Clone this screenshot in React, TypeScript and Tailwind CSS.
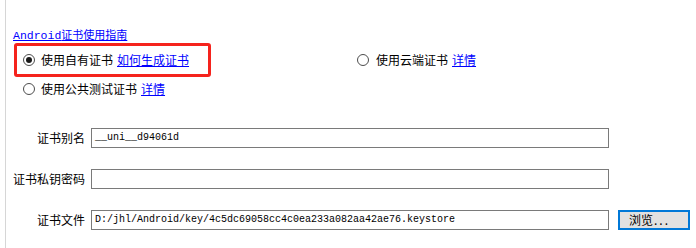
import React from 'react'

const cjk = "font-['Noto_Sans_CJK_SC','Noto_Sans',sans-serif]"
const mono = "font-['Liberation_Mono','Noto_Sans_CJK_SC',monospace]"

function Radio({ checked }: { checked?: boolean }) {
  return (
    <span className="w-[12px] h-[12px] rounded-full border border-[#4d4d4d] bg-white flex items-center justify-center shrink-0">
      {checked && <span className="w-[6px] h-[6px] rounded-full bg-[#1a1a1a]" />}
    </span>
  )
}

function Field({ label, value, top }: { label: string; value?: string; top: string }) {
  return (
    <div className={`flex items-center ${top}`}>
      <div className="w-[79px] text-right text-[12px] leading-[20px] text-black">{label}</div>
      <div className={`ml-[6px] w-[518px] h-[20px] border border-[#7a7a7a] bg-white px-[3px] text-[10px] leading-[18px] text-black ${mono} whitespace-nowrap overflow-hidden`}>
        {value}
      </div>
    </div>
  )
}

export default function App() {
  return (
    <div className={`w-[696px] h-[248px] bg-white flex overflow-hidden ${cjk}`}>
      <div className="ml-[5px] border-l border-[#d6d6d6] flex-1 h-full">
        <div className="pt-[20px] pl-[7px] h-[36px]">
          <a href="#" className="text-[11px] leading-[16px] text-[#0000ff] underline">
            <span className={`${mono} text-[11.5px]`}>Android</span>证书使用指南
          </a>
        </div>

        <div className="mt-[7px] flex items-start">
          <div className="ml-[8px] w-[197px] h-[34px] border-[3px] border-[#f5231d] rounded-[3px] flex items-center pl-[6px] gap-[6px]">
            <Radio checked />
            <span className="text-[12px] leading-[16px] text-black">使用自有证书</span>
            <a href="#" className="-ml-[2px] text-[12px] leading-[16px] text-[#0000ff] underline">如何生成证书</a>
          </div>
          <div className="ml-[146px] h-[34px] flex items-center gap-[7px]">
            <Radio />
            <span className="text-[12px] leading-[16px] text-black">使用云端证书</span>
            <a href="#" className="-ml-[3px] text-[12px] leading-[16px] text-[#0000ff] underline">详情</a>
          </div>
        </div>

        <div className="mt-[4px] ml-[17px] h-[16px] flex items-center gap-[6px]">
          <Radio />
          <span className="text-[12px] leading-[16px] text-black">使用公共测试证书</span>
          <a href="#" className="-ml-[2px] text-[12px] leading-[16px] text-[#0000ff] underline">详情</a>
        </div>

        <Field label="证书别名" value="__uni__d94061d" top="mt-[31px]" />
        <Field label="证书私钥密码" top="mt-[21px]" />
        <div className="flex items-center mt-[21px]">
          <div className="w-[79px] text-right text-[12px] leading-[20px] text-black">证书文件</div>
          <div className={`ml-[6px] w-[518px] h-[20px] border border-[#7a7a7a] bg-white px-[3px] text-[10px] leading-[18px] text-black ${mono} whitespace-nowrap overflow-hidden`}>
            D:/jhl/Android/key/4c5dc69058cc4c0ea233a082aa42ae76.keystore
          </div>
          <button className="ml-[9px] w-[72px] h-[20px] border-2 border-[#0078d7] bg-[#e1e1e1] text-[12px] leading-[16px] text-black flex items-center justify-start pl-[9px]">
            浏览<span className="tracking-[2px] ml-[1px]">...</span>
          </button>
        </div>
      </div>
    </div>
  )
}
